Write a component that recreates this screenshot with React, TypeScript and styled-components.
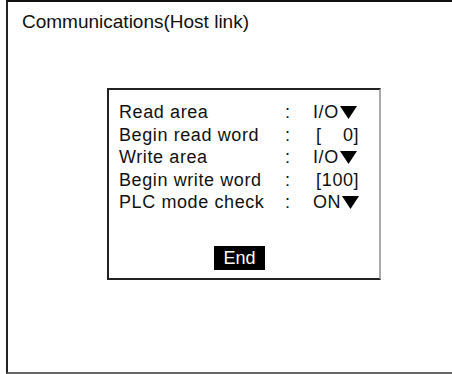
import React from "react";
import styled, { createGlobalStyle } from "styled-components";

const GlobalStyle = createGlobalStyle`
  html, body {
    margin: 0;
    padding: 0;
    background: #fff;
  }
  body {
    font-family: "Liberation Sans", Arial, sans-serif;
    color: #111;
  }
`;

const Screen = styled.div`
  box-sizing: border-box;
  margin-left: 6px;
  width: 460px;
  height: 374px;
  border-top: 2px solid #111;
  border-left: 2px solid #222;
  border-bottom: 2px solid #666;
  overflow: hidden;
`;

const Title = styled.div`
  padding: 9px 0 0 14px;
  font-size: 19px;
  line-height: 22px;
`;

const Dialog = styled.div`
  box-sizing: border-box;
  margin: 55px 0 0 99px;
  width: 274px;
  height: 192px;
  border: 2px solid #222;
  border-right-color: #aaa;
  padding: 11px 0 0 10px;
  display: flex;
  flex-direction: column;
`;

const Fields = styled.div`
  display: grid;
  grid-template-columns: 166px 28px auto;
  font-size: 18px;
  line-height: 22.5px;
  letter-spacing: 0.6px;
`;

const Value = styled.span<{ $indent: number }>`
  display: inline-flex;
  align-items: center;
  padding-left: ${({ $indent }) => `${$indent}px`};
  white-space: pre;
`;

const Number = styled.span`
  display: inline-block;
  width: 32px;
  text-align: right;
`;

const Arrow = styled.svg`
  width: 17px;
  height: 13px;
  margin-left: 1px;
`;

const EndButton = styled.div`
  align-self: flex-start;
  margin: 32px 0 0 95px;
  width: 51px;
  height: 24px;
  background: #000;
  color: #fff;
  font-size: 18px;
  line-height: 24px;
  text-align: center;
`;

const Drop = () => (
  <Arrow viewBox="0 0 17 13">
    <polygon points="0,0 17,0 8.5,13" fill="#000" />
  </Arrow>
);

const rows: { label: string; value: string; word?: boolean }[] = [
  { label: "Read area", value: "I/O" },
  { label: "Begin read word", value: "0", word: true },
  { label: "Write area", value: "I/O" },
  { label: "Begin write word", value: "100", word: true },
  { label: "PLC mode check", value: "ON" },
];

export default function App() {
  return (
    <>
      <GlobalStyle />
      <Screen>
        <Title>Communications(Host link)</Title>
        <Dialog>
          <Fields>
            {rows.map((r) => (
              <React.Fragment key={r.label}>
                <span>{r.label}</span>
                <span>:</span>
                {r.word ? (
                  <Value $indent={3}>
                    [<Number>{r.value}</Number>]
                  </Value>
                ) : (
                  <Value $indent={0}>
                    {r.value}
                    <Drop />
                  </Value>
                )}
              </React.Fragment>
            ))}
          </Fields>
          <EndButton>End</EndButton>
        </Dialog>
      </Screen>
    </>
  );
}
